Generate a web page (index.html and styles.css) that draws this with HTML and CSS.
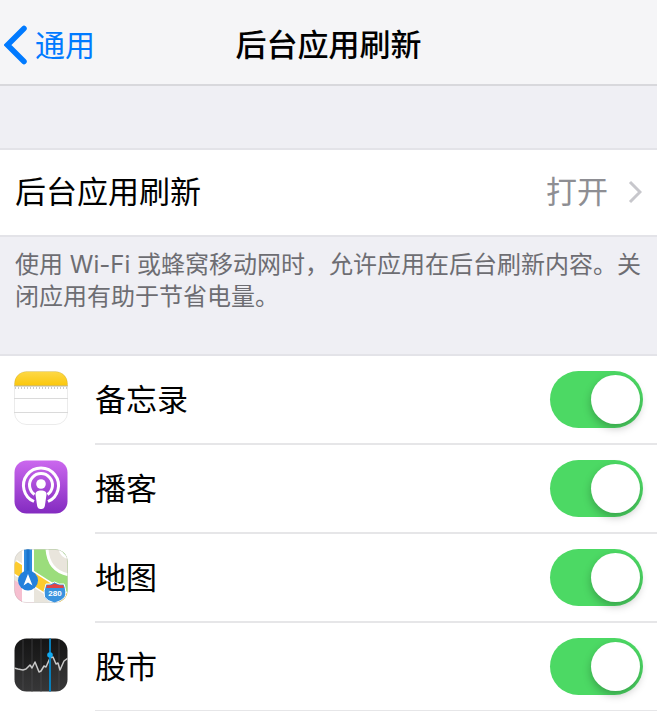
FILE: index.html
```html
<!DOCTYPE html>
<html lang="zh-CN">

<head>
    <meta charset="UTF-8" />
    <meta name="viewport" content="width=device-width, initial-scale=1.0" />
    <title>后台应用刷新</title>
    <link rel="stylesheet" href="styles.css">
</head>

<body>
    <header class="navbar">
        <a class="back" href="#">
            <svg class="back-icon" viewBox="0 0 24 40">
                <path d="M20 3.500L3.500 20L20 36.500" fill="none" stroke="#007aff" stroke-width="5.500" stroke-linecap="round" stroke-linejoin="miter" />
            </svg>
            <span>通用</span>
        </a>
        <h1>后台应用刷新</h1>
    </header>

    <main>
        <a class="setting" href="#">
            <span>后台应用刷新</span>
            <span class="setting-value">打开</span>
            <svg class="chevron" viewBox="0 0 14 24">
                <path d="M2 2L12 12L2 22" fill="none" stroke="#c7c7cc" stroke-width="3" />
            </svg>
        </a>
        <p class="note">使用 Wi-Fi 或蜂窝移动网时，允许应用在后台刷新内容。关闭应用有助于节省电量。</p>

        <ul class="apps">
            <li class="app">
                <svg class="app-icon" viewBox="0 0 54 54">
                    <defs>
                        <linearGradient id="notes-top" x1="0" y1="0" x2="0" y2="1">
                            <stop offset="0" stop-color="#fdd94a" />
                            <stop offset="1" stop-color="#fbc70a" />
                        </linearGradient>
                        <clipPath id="tile">
                            <rect x="0.500" y="0.500" width="53" height="53" rx="12" />
                        </clipPath>
                    </defs>
                    <g clip-path="url(#tile)">
                        <rect width="54" height="54" fill="#fff" />
                        <rect width="54" height="15" fill="url(#notes-top)" />
                        <path d="M0 15H54" stroke="#b8b3a0" />
                        <path d="M1 17H54" stroke="#bbb" stroke-width="1.500" stroke-dasharray="1 2" />
                        <path d="M0 27.500H54M0 41.500H54" stroke="#dadada" />
                    </g>
                    <rect x="0.500" y="0.500" width="53" height="53" rx="12" fill="none" stroke="#000" stroke-opacity="0.080" />
                </svg>
                <div class="app-row">
                    <label for="notes">备忘录</label>
                    <input class="switch" type="checkbox" id="notes" checked />
                </div>
            </li>
            <li class="app">
                <svg class="app-icon" viewBox="0 0 54 54">
                    <defs>
                        <linearGradient id="podcast-bg" x1="0" y1="0" x2="0" y2="1">
                            <stop offset="0" stop-color="#cb68ee" />
                            <stop offset="1" stop-color="#832bc0" />
                        </linearGradient>
                    </defs>
                    <rect x="0.500" y="0.500" width="53" height="53" rx="12" fill="url(#podcast-bg)" />
                    <g fill="none" stroke="#fff" stroke-width="3">
                        <path d="M20 41.500A17.500 17.500 0 1 1 34 41.500" />
                        <path d="M20.500 34.500A11.500 11.500 0 1 1 33.500 34.500" />
                    </g>
                    <circle cx="27" cy="24" r="4.800" fill="#fff" />
                    <path d="M21.500 34.500C21.500 31.500 23.500 30.500 27 30.500S32.500 31.500 32.500 34.500L31 45C30.500 48.500 29 49 27 49S23.500 48.500 23 45Z" fill="#fff" />
                </svg>
                <div class="app-row">
                    <label for="podcasts">播客</label>
                    <input class="switch" type="checkbox" id="podcasts" checked />
                </div>
            </li>
            <li class="app">
                <svg class="app-icon" viewBox="0 0 54 54">
                    <g clip-path="url(#tile)">
                        <rect width="54" height="54" fill="#e9e5dc" />
                        <path d="M20 0H54V46L20 22Z" fill="#9bdd7c" />
                        <path d="M33 0C34 15 42 24 56 26V9C50 8 47 5 46 0Z" fill="#e9e5dc" />
                        <path d="M33 0C34 15 42 24 56 26M46 0C47 5 50 8 56 9" fill="none" stroke="#fff" stroke-width="3" />
                        <path d="M0 31L20 43V54H0Z" fill="#f6bfd0" />
                        <path d="M-1 17L56 53" stroke="#fff" stroke-width="14" />
                        <path d="M-1 17L56 53" stroke="#fdcb2f" stroke-width="11" />
                        <path d="M8 0H20V54H8Z" fill="#fff" />
                        <path d="M10 0H18V31H10Z" fill="#2d8bde" />
                        <path d="M14 0V25" stroke="#1974cd" stroke-width="3" />
                        <circle cx="14" cy="31.500" r="10" fill="#2380dc" />
                        <path d="M14 25L18.500 36.500L14 33.500L9.500 36.500Z" fill="#fff" />
                        <path d="M32 35Q36 36 40.500 33Q45 36 50 35Q53 43 51 48Q48 52 40.500 54Q33 52 30.500 48Q29 42 32 35Z" fill="#3a93df" stroke="#fff" />
                        <path d="M33 36Q37 37 40.500 34.500Q45 37 49 36L50 39H32Z" fill="#e14446" />
                    </g>
                    <text class="road-number" x="41" y="47">280</text>
                    <rect x="0.500" y="0.500" width="53" height="53" rx="12" fill="none" stroke="#000" stroke-opacity="0.080" />
                </svg>
                <div class="app-row">
                    <label for="maps">地图</label>
                    <input class="switch" type="checkbox" id="maps" checked />
                </div>
            </li>
            <li class="app">
                <svg class="app-icon" viewBox="0 0 54 54">
                    <defs>
                        <linearGradient id="stocks-bg" x1="0" y1="0" x2="0" y2="1">
                            <stop offset="0" stop-color="#151515" />
                            <stop offset="1" stop-color="#2b2b2c" />
                        </linearGradient>
                    </defs>
                    <g clip-path="url(#tile)">
                        <rect width="54" height="54" fill="url(#stocks-bg)" />
                        <path d="M9 0V54M18 0V54M27 0V54M45 0V54" stroke="#38383a" />
                        <path d="M0 30L4 31L9 32L12 31L16 27L18 30L21 24L25 34L27 33L30 28L32 29L36 20L39 19L42 26L44 25L46 32L50 23L54 20V54H0Z" fill="#fff" fill-opacity="0.060" />
                        <path d="M0 30L4 31L9 32L12 31L16 27L18 30L21 24L25 34L27 33L30 28L32 29L36 20L39 19L42 26L44 25L46 32L50 23L54 20" fill="none" stroke="#c8c8c8" stroke-width="1.500" stroke-linejoin="round" />
                        <path d="M36 0V54" stroke="#087eb9" stroke-width="2" />
                        <circle cx="36" cy="17" r="2.800" fill="#12aaf1" />
                    </g>
                </svg>
                <div class="app-row">
                    <label for="stocks">股市</label>
                    <input class="switch" type="checkbox" id="stocks" checked />
                </div>
            </li>
        </ul>
    </main>
</body>

</html>
```
FILE: styles.css
```css
* {
    box-sizing: border-box;
}

body {
    margin: 0;
    background: #efeff4;
    color: #000;
    font-family: Inter, "Noto Sans CJK SC", sans-serif;
    font-size: 31px;
    line-height: 40px;
}

a {
    color: inherit;
    text-decoration: none;
}

.navbar {
    display: grid;
    grid-template-columns: 1fr auto 1fr;
    align-items: center;
    height: 86px;
    padding: 6px 4px 0;
    background: #f5f5f7;
    border-bottom: 2px solid #d8d8dc;
}

.back {
    display: flex;
    align-items: center;
    gap: 7px;
    color: #007aff;
    font-size: 30px;
}

.back-icon {
    width: 24px;
    height: 40px;
}

h1 {
    margin: 0;
    font-size: 31px;
    font-weight: 500;
}

.setting {
    display: flex;
    align-items: center;
    height: 89px;
    margin-top: 62px;
    padding: 0 15px 1px;
    background: #fff;
    border-top: 2px solid #e3e3e8;
    border-bottom: 2px solid #e3e3e8;
}

.setting-value {
    margin-left: auto;
    color: #8e8e93;
}

.chevron {
    width: 14px;
    height: 24px;
    margin-left: 20px;
}

.note {
    margin: 0;
    padding: 12px 15px 41px;
    color: #6d6d72;
    font-size: 24px;
    line-height: 32px;
}

.apps {
    margin: 0;
    padding: 0;
    list-style: none;
    background: #fff;
    border-top: 2px solid #e3e3e8;
}

.app {
    display: flex;
    align-items: center;
    gap: 27px;
    height: 89px;
    padding-left: 14px;
}

.app-icon {
    flex: none;
    width: 54px;
    height: 54px;
    margin-bottom: 5px;
}

.app-row {
    display: flex;
    flex: 1;
    align-items: center;
    justify-content: space-between;
    height: 100%;
    padding-right: 14px;
    border-bottom: 2px solid #e6e6e8;
}

.road-number {
    fill: #fff;
    font-family: "Liberation Sans", Arial, sans-serif;
    font-size: 8px;
    font-weight: bold;
    text-anchor: middle;
}

.switch {
    appearance: none;
    width: 93px;
    height: 57px;
    margin: 0;
    padding: 4px 3px;
    border-radius: 29px;
    background: #e5e5ea;
    cursor: pointer;
}

.switch::before {
    content: "";
    display: block;
    width: 49px;
    height: 49px;
    border-radius: 50%;
    background: #fff;
    box-shadow: 0 4px 8px rgba(0, 0, 0, 0.25);
}

.switch:checked {
    background: #4cd964;
}

.switch:checked::before {
    margin-left: auto;
}
```
